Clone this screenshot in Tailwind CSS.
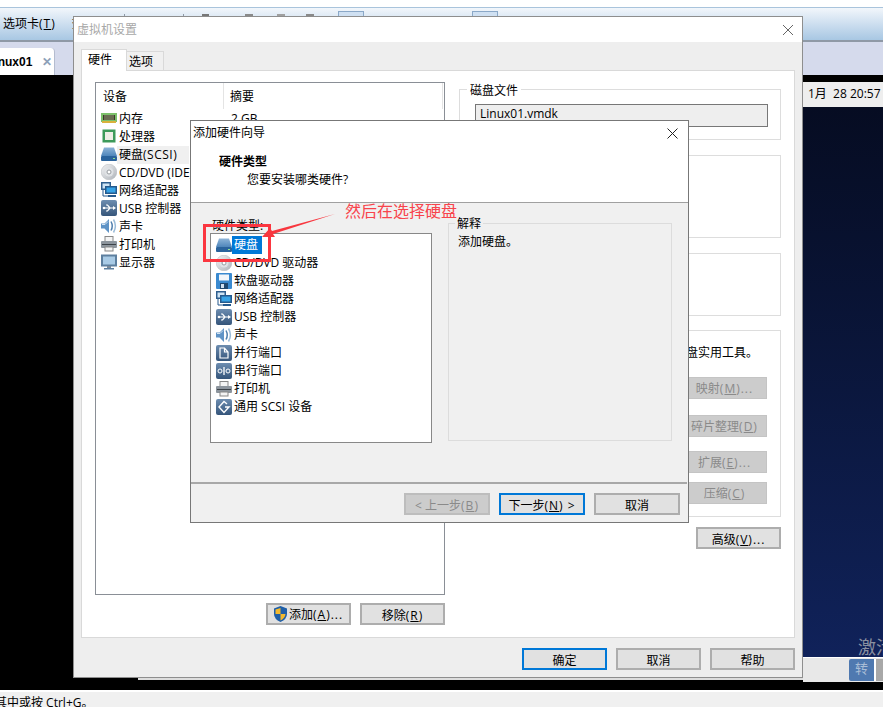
<!DOCTYPE html>
<html lang="zh-CN">
<head>
    <meta charset="UTF-8">
    <title>虚拟机设置</title>
    <script src="https://cdn.jsdelivr.net/npm/@tailwindcss/browser@4"></script>
</head>
<body class="bg-white">
<svg width="0" height="0" class="absolute">
    <defs>
        <linearGradient id="sq" x1="0" y1="0" x2="0" y2="1"><stop offset="0" stop-color="#6d8db0"/><stop offset="1" stop-color="#35557a"/></linearGradient>
        <linearGradient id="hd" x1="0" y1="0" x2="0" y2="1"><stop offset="0" stop-color="#8db4d8"/><stop offset="1" stop-color="#4f86bb"/></linearGradient>
        <linearGradient id="cdg" x1="0" y1="0" x2="1" y2="1"><stop offset="0" stop-color="#f2f3f5"/><stop offset="1" stop-color="#aeb3b9"/></linearGradient>
        <symbol id="i-ram" viewBox="0 0 16 16"><rect x="0" y="3" width="16" height="9" fill="#7cc06a"/><rect x="2" y="5" width="12" height="5" fill="#3a3a2a"/><path d="M4 5v5M6 5v5M8 5v5M10 5v5M12 5v5" stroke="#9aa07a"/><rect x="1" y="11" width="14" height="2" fill="#d9b23c"/></symbol>
        <symbol id="i-cpu" viewBox="0 0 16 16"><rect x="1.500" y="1.500" width="13" height="13" fill="#3d9a5a"/><rect x="4" y="4" width="8" height="8" fill="#eeeee6"/></symbol>
        <symbol id="i-hdd" viewBox="0 0 16 16"><path d="M3 1.500h10l3 8.500H0z" fill="url(#hd)"/><rect x="0" y="10" width="16" height="5" rx="1" fill="#2a639c"/><rect x="12" y="12" width="2" height="1" fill="#8fe08f"/></symbol>
        <symbol id="i-cd" viewBox="0 0 16 16"><circle cx="8" cy="8" r="7.800" fill="url(#cdg)" stroke="#b3b6ba" stroke-width=".5"/><circle cx="8" cy="8" r="4.500" fill="#dfe2e5"/><circle cx="8" cy="8" r="2" fill="#fff" stroke="#989ca0"/></symbol>
        <symbol id="i-net" viewBox="0 0 16 16"><rect x="0" y="0" width="10" height="8" fill="#2f5f8f"/><rect x="1.500" y="1.500" width="7" height="5" fill="#cfe4f4"/><rect x="4" y="4" width="12" height="8" fill="#24598d"/><rect x="5.500" y="5.500" width="9" height="5" fill="#37a3e6"/><rect x="7" y="13" width="8" height="2" fill="#24598d"/><path d="M2 8v6h5" stroke="#24598d" fill="none"/></symbol>
        <symbol id="i-usb" viewBox="0 0 16 16"><rect x="0" y="0" width="16" height="16" rx="2" fill="url(#sq)"/><path d="M2 8h11M9 8L6.500 5H5M9 8l-2.500 3H5" stroke="#fff" stroke-width="1.200" fill="none"/><path d="M12 6l3 2-3 2z" fill="#fff"/><circle cx="3" cy="8" r="1.300" fill="#fff"/></symbol>
        <symbol id="i-snd" viewBox="0 0 16 16"><path d="M0 5.500h3.500L8 1v14l-4.500-4.500H0z" fill="#5f93c6"/><path d="M1 6.500h3l3-3" stroke="#d4e4f2" fill="none"/><path d="M10 3.500q2.500 4.500 0 9" stroke="#4f7fae" stroke-width="1.500" fill="none"/><path d="M12.500 1.500q3.800 6.500 0 13" stroke="#9abbd8" stroke-width="1.500" fill="none"/></symbol>
        <symbol id="i-prn" viewBox="0 0 16 16"><rect x="4" y="0.500" width="8" height="5" fill="#f4f4f4" stroke="#888"/><rect x="0" y="5" width="16" height="7" rx="1" fill="#8d959d"/><rect x="1" y="8" width="14" height="1" fill="#3c4248"/><rect x="4" y="11" width="8" height="4" fill="#f4f4f4" stroke="#888"/></symbol>
        <symbol id="i-mon" viewBox="0 0 16 16"><rect x="0" y="0.500" width="16" height="12" fill="#5d7f9f"/><rect x="2" y="2.500" width="12" height="8" fill="#a9cbe6"/><rect x="6" y="12" width="4" height="2" fill="#7a8a9a"/><rect x="3" y="14" width="10" height="1.500" fill="#5d7f9f"/></symbol>
        <symbol id="i-fdd" viewBox="0 0 16 16"><rect x="0" y="0" width="16" height="16" rx="1" fill="#3a8ad0"/><rect x="3" y="1.500" width="10" height="6" fill="#f2f6fa"/><rect x="4" y="10" width="8" height="6" fill="#20486f"/><rect x="5" y="11" width="3" height="4" fill="#cfe0f0"/></symbol>
        <symbol id="i-par" viewBox="0 0 16 16"><rect x="0" y="0" width="16" height="16" rx="2" fill="url(#sq)"/><path d="M4 13V3h4.500L12 7v6zM8.500 3v4H12" stroke="#fff" stroke-width="1.200" fill="none"/></symbol>
        <symbol id="i-ser" viewBox="0 0 16 16"><rect x="0" y="0" width="16" height="16" rx="2" fill="url(#sq)"/><circle cx="4" cy="8" r="2" stroke="#fff" fill="none"/><circle cx="12" cy="8" r="2" stroke="#fff" fill="none"/><path d="M8 4v8" stroke="#fff" stroke-width="1.300"/></symbol>
        <symbol id="i-scsi" viewBox="0 0 16 16"><rect x="0" y="0" width="16" height="16" rx="2" fill="url(#sq)"/><path d="M11 5L8 2.500 3 8l5 5.500L13 8H9" stroke="#fff" stroke-width="1.400" fill="none"/></symbol>
    </defs>
</svg>

<div class="relative w-[883px] h-[707px] overflow-hidden flex flex-col text-[12px] leading-[18px] text-black font-['Open_Sans','Noto_Sans_CJK_SC',sans-serif]">
    <!-- 背后的主窗口 -->
    <div class="h-[8px] bg-white border-b border-[#a9c4dc] shrink-0"></div>
    <div class="relative h-[34px] bg-gradient-to-b from-[#f2f6fb] to-[#a8c7e3] border-b-2 border-[#8f99a6] pl-[3px] pt-[7px] shrink-0">
        <span>选项卡<span class="tracking-[1px]">(<span class="underline">T</span>)</span></span>
        <span class="ml-[13px]">查</span>
        <div class="absolute left-[124px] top-[6px] w-px h-[3px] bg-[#8f99a6]"></div>
        <div class="absolute left-[183px] top-[6px] w-px h-[3px] bg-[#8f99a6]"></div>
        <div class="absolute left-[202px] top-[6px] w-[7px] h-[3px] bg-[#777777]"></div>
        <div class="absolute left-[245px] top-[6px] w-[8px] h-[3px] bg-[#8a8a8a]"></div>
        <div class="absolute left-[277px] top-[6px] w-[8px] h-[3px] bg-[#a0a0a0]"></div>
        <div class="absolute left-[306px] top-[6px] w-[8px] h-[3px] bg-[#8a8a8a]"></div>
        <div class="absolute left-[338px] top-[3px] w-[26px] h-[20px] border border-[#8aa8c8] bg-[#cfe0f2]"></div>
        <div class="absolute left-[472px] top-[3px] w-[26px] h-[20px] border border-[#8aa8c8] bg-[#cfe0f2]"></div>
    </div>
    <div class="h-[33px] bg-[#d5daec] pt-[6px] shrink-0">
        <div class="w-[55px] h-[27px] bg-white rounded-tr-[4px] border-r border-[#b4bccf] flex items-center overflow-hidden">
            <span class="ml-[-13px] font-bold font-['Liberation_Sans']">Linux01</span>
            <span class="ml-[10px] text-[#8ca0b8] font-bold">✕</span>
        </div>
    </div>
    <div class="relative flex-1 bg-black">
        <div class="absolute left-[803px] right-0 top-[7px] h-[600px] flex flex-col">
            <div class="h-[25px] bg-[#eeeeee] pl-[5px] pt-[3px] whitespace-nowrap">1月&nbsp; 28 20:57</div>
            <div class="relative flex-1 bg-gradient-to-b from-[#060c22] to-[#10225a] overflow-hidden">
                <span class="absolute left-[55px] bottom-[1px] text-[#8a90a0] text-[18px] whitespace-nowrap">激活</span>
            </div>
            <div class="h-[25px] bg-[#e8e8e8] border-t border-white flex items-center pl-[46px]">
                <div class="w-[27px] h-[22px] bg-[#4f79b0] rounded-l-[2px] border-r-2 border-white text-[#a9bdd6] text-center text-[13px]">转</div>
                <div class="flex-1 h-[22px] bg-[#a8a8a8]"></div>
            </div>
        </div>
    </div>
    <div class="h-[17px] bg-[#f0f0f0] border-t-2 border-white overflow-hidden whitespace-nowrap pt-[2px] shrink-0"><span class="ml-[-5px] inline-block">其中或按 Ctrl+G。</span></div>

    <!-- 虚拟机设置 -->
    <div class="absolute left-[138px] top-[678px] w-[665px] h-[2px] bg-[#dddddd]"></div>
    <div class="absolute left-[73px] top-[16px] w-[730px] h-[662px] bg-[#eeeeee] border border-[#8e8e8e] flex flex-col">
        <div class="h-[25px] bg-white flex items-center justify-between pl-[3px] pr-[8px] shrink-0">
            <span class="text-[#a8a8a8]">虚拟机设置</span>
            <svg width="12" height="12" viewBox="0 0 12 12"><path d="M1 1l10 10M11 1L1 11" stroke="#666"/></svg>
        </div>
        <div class="flex items-end pl-[7px] pt-[7px] h-[29px] shrink-0 relative z-10 mb-[-1px]">
            <div class="w-[46px] h-[22px] bg-white border border-b-0 border-[#d9d9d9] pl-[6px] pt-[1px]">硬件</div>
            <div class="w-[37px] h-[20px] bg-[#f0f0f0] border border-l-0 border-[#d9d9d9] pl-[2px] pt-[1px]">选项</div>
        </div>
        <div class="mx-[7px] h-[568px] bg-white border border-[#d9d9d9] flex pl-[13px] pt-[11px] shrink-0">
            <div class="w-[350px]">
                <div class="h-[513px] border border-[#8a8f96] pl-[5px]">
                    <div class="flex h-[26px] mr-px">
                        <div class="w-[123px] pl-[2px] pt-[5px] border-r border-[#e4e4e4]">设备</div>
                        <div class="flex-1 pl-[6px] pt-[5px] border-r border-[#e4e4e4]">摘要</div>
                    </div>
                    <div class="flex flex-col mt-[1px]">
                        <div class="flex items-center h-[18px]"><svg class="w-[16px] h-[16px] mr-[2px] -mt-[2px]"><use href="#i-ram"/></svg><span>内存</span><span class="absolute left-[157px]">2 GB</span></div>
                        <div class="flex items-center h-[18px]"><svg class="w-[16px] h-[16px] mr-[2px] -mt-[2px]"><use href="#i-cpu"/></svg>处理器</div>
                        <div class="flex items-center h-[18px]"><svg class="w-[16px] h-[16px] -mt-[2px]"><use href="#i-hdd"/></svg><span class="bg-[#f0f0f0] pl-[2px] pr-[12px]">硬盘<span class="tracking-[0.5px]">(SCSI)</span></span></div>
                        <div class="flex items-center h-[18px]"><svg class="w-[16px] h-[16px] mr-[2px] -mt-[2px]"><use href="#i-cd"/></svg>CD/DVD (IDE)</div>
                        <div class="flex items-center h-[18px]"><svg class="w-[16px] h-[16px] mr-[2px] -mt-[2px]"><use href="#i-net"/></svg>网络适配器</div>
                        <div class="flex items-center h-[18px]"><svg class="w-[16px] h-[16px] mr-[2px] -mt-[2px]"><use href="#i-usb"/></svg>USB 控制器</div>
                        <div class="flex items-center h-[18px]"><svg class="w-[16px] h-[16px] mr-[2px] -mt-[2px]"><use href="#i-snd"/></svg>声卡</div>
                        <div class="flex items-center h-[18px]"><svg class="w-[16px] h-[16px] mr-[2px] -mt-[2px]"><use href="#i-prn"/></svg>打印机</div>
                        <div class="flex items-center h-[18px]"><svg class="w-[16px] h-[16px] mr-[2px] -mt-[2px]"><use href="#i-mon"/></svg>显示器</div>
                    </div>
                </div>
                <div class="flex justify-end gap-[9px] mt-[8px]">
                    <button class="w-[85px] h-[22px] bg-[#e1e1e1] border-2 border-[#adadad] flex items-center pl-[5px]">
                        <svg width="15" height="16" viewBox="0 0 15 16" class="mr-[1px]"><path d="M7.500 0L14 2.500V8q0 5-6.500 8Q1 13 1 8V2.500z" fill="#1f5fa8"/><path d="M7.500 2v6H2.500V3.500zM7.500 8h5q-.5 4-5 6.500z" fill="#f3b92e"/></svg>
                        <span class="pt-[2px]">添加<span class="tracking-[1px]">(<span class="underline">A</span>)...</span></span>
                    </button>
                    <button class="w-[85px] h-[22px] bg-[#e1e1e1] border-2 border-[#adadad] pt-[2px]">移除<span class="tracking-[1px]">(<span class="underline">R</span>)</span></button>
                </div>
            </div>
            <div class="w-[322px] ml-[14px] pt-[7px] flex flex-col">
                <div class="relative h-[51px] border border-[#dddddd] pt-[14px] pl-[15px]">
                    <span class="absolute left-[7px] top-[-8px] bg-white px-[3px]">磁盘文件</span>
                    <div class="w-[293px] h-[23px] bg-[#eeeeee] border border-[#777777] pl-[4px]">Linux01.vmdk</div>
                </div>
                <div class="h-[83px] mt-[15px] border border-[#dddddd]"></div>
                <div class="h-[63px] mt-[15px] border border-[#dddddd]"></div>
                <div class="h-[187px] mt-[14px] border border-[#dddddd] flex flex-col items-end pr-[13px] pt-[13px]">
                    <div class="whitespace-nowrap mr-[9px]">盘实用工具。</div>
                    <button class="w-[85px] h-[22px] mt-[15px] bg-[#cccccc] border border-[#c4c4c4] text-[#8a8a8a] pt-[2px]">映射<span class="tracking-[1px]">(<span class="underline">M</span>)...</span></button>
                    <button class="w-[85px] h-[22px] mt-[16px] bg-[#cccccc] border border-[#c4c4c4] text-[#8a8a8a] pt-[2px]">碎片整理<span class="tracking-[1px]">(<span class="underline">D</span>)</span></button>
                    <button class="w-[85px] h-[22px] mt-[14px] bg-[#cccccc] border border-[#c4c4c4] text-[#8a8a8a] pt-[2px]">扩展<span class="tracking-[1px]">(<span class="underline">E</span>)...</span></button>
                    <button class="w-[85px] h-[22px] mt-[9px] bg-[#cccccc] border border-[#c4c4c4] text-[#8a8a8a] pt-[2px]">压缩<span class="tracking-[1px]">(<span class="underline">C</span>)</span></button>
                </div>
                <button class="w-[85px] h-[22px] mt-[10px] self-end bg-[#e1e1e1] border-2 border-[#adadad] pt-[2px]">高级<span class="tracking-[1px]">(<span class="underline">V</span>)...</span></button>
            </div>
        </div>
        <div class="flex justify-end gap-[9px] pr-[7px] pt-[10px]">
            <button class="w-[85px] h-[22px] bg-[#e1e1e1] border-2 border-[#0078d7] pt-[2px]">确定</button>
            <button class="w-[85px] h-[22px] bg-[#e1e1e1] border-2 border-[#adadad] pt-[2px]">取消</button>
            <button class="w-[85px] h-[22px] bg-[#e1e1e1] border-2 border-[#adadad] pt-[2px]">帮助</button>
        </div>
    </div>

    <!-- 添加硬件向导 -->
    <div class="absolute left-[190px] top-[120px] w-[499px] h-[403px] bg-[#f0f0f0] border border-[#777777] flex flex-col">
        <div class="h-[82px] bg-white border-b border-[#a0a0a0] shrink-0">
            <div class="flex items-center justify-between pl-[2px] pr-[10px] h-[24px]">
                <span>添加硬件向导</span>
                <svg width="11" height="11" viewBox="0 0 11 11"><path d="M.5.500l10 10M10.500.500l-10 10" stroke="#222"/></svg>
            </div>
            <div class="pl-[28px] pt-[8px] font-bold">硬件类型</div>
            <div class="pl-[56px]">您要安装哪类硬件?</div>
        </div>
        <div class="h-[279px] flex pl-[19px] shrink-0">
            <div class="w-[222px] pt-[14px]">
                <div class="h-[16px] pl-[2px] whitespace-nowrap">硬件类型:</div>
                <div class="h-[210px] bg-white border border-[#888888] pl-[5px] pt-[2px]">
                    <div class="flex items-center h-[18px]"><svg class="w-[16px] h-[16px]"><use href="#i-hdd"/></svg><span class="bg-[#0078d7] text-white pl-[2px] pr-[4px]">硬盘</span></div>
                    <div class="flex items-center h-[18px]"><svg class="w-[16px] h-[16px] mr-[2px]"><use href="#i-cd"/></svg>CD/DVD 驱动器</div>
                    <div class="flex items-center h-[18px]"><svg class="w-[16px] h-[16px] mr-[2px]"><use href="#i-fdd"/></svg>软盘驱动器</div>
                    <div class="flex items-center h-[18px]"><svg class="w-[16px] h-[16px] mr-[2px]"><use href="#i-net"/></svg>网络适配器</div>
                    <div class="flex items-center h-[18px]"><svg class="w-[16px] h-[16px] mr-[2px]"><use href="#i-usb"/></svg>USB 控制器</div>
                    <div class="flex items-center h-[18px]"><svg class="w-[16px] h-[16px] mr-[2px]"><use href="#i-snd"/></svg>声卡</div>
                    <div class="flex items-center h-[18px]"><svg class="w-[16px] h-[16px] mr-[2px]"><use href="#i-par"/></svg>并行端口</div>
                    <div class="flex items-center h-[18px]"><svg class="w-[16px] h-[16px] mr-[2px]"><use href="#i-ser"/></svg>串行端口</div>
                    <div class="flex items-center h-[18px]"><svg class="w-[16px] h-[16px] mr-[2px]"><use href="#i-prn"/></svg>打印机</div>
                    <div class="flex items-center h-[18px]"><svg class="w-[16px] h-[16px] mr-[2px]"><use href="#i-scsi"/></svg>通用 SCSI 设备</div>
                </div>
            </div>
            <div class="relative w-[224px] h-[218px] ml-[16px] mt-[20px] border border-[#dcdcdc] pl-[9px] pt-[9px]">
                <span class="absolute left-[6px] top-[-9px] bg-[#f0f0f0] px-[2px]">解释</span>
                添加硬盘。
            </div>
        </div>
        <div class="mr-[1px] border-t-2 border-[#a8a8a8] flex justify-end gap-[9px] pr-[7px] pt-[9px]">
            <button class="w-[86px] h-[22px] bg-[#cccccc] border-2 border-[#bdbdbd] text-[#8a8a8a] pt-[2px]">&lt; 上一步<span class="tracking-[1px]">(<span class="underline">B</span>)</span></button>
            <button class="w-[86px] h-[22px] bg-[#e1e1e1] border-2 border-[#0078d7] pt-[2px]">下一步<span class="tracking-[1px]">(<span class="underline">N</span>) &gt;</span></button>
            <button class="w-[86px] h-[22px] bg-[#e1e1e1] border-2 border-[#adadad] pt-[2px]">取消</button>
        </div>
    </div>

    <!-- 标注 -->
    <div class="absolute left-[203px] top-[224px] w-[68px] h-[38px] border-[3px] border-[#fb3640]"></div>
    <svg class="absolute left-[255px] top-[205px]" width="90" height="40" viewBox="0 0 90 40"><path d="M80 9L17 26l-2-3-8 9h13l-2-3z" fill="#f8373f"/></svg>
    <span class="absolute left-[345px] top-[200px] text-[16px] leading-[22px] text-[#f8444c] whitespace-nowrap">然后在选择硬盘</span>
</div>
</body>
</html>
